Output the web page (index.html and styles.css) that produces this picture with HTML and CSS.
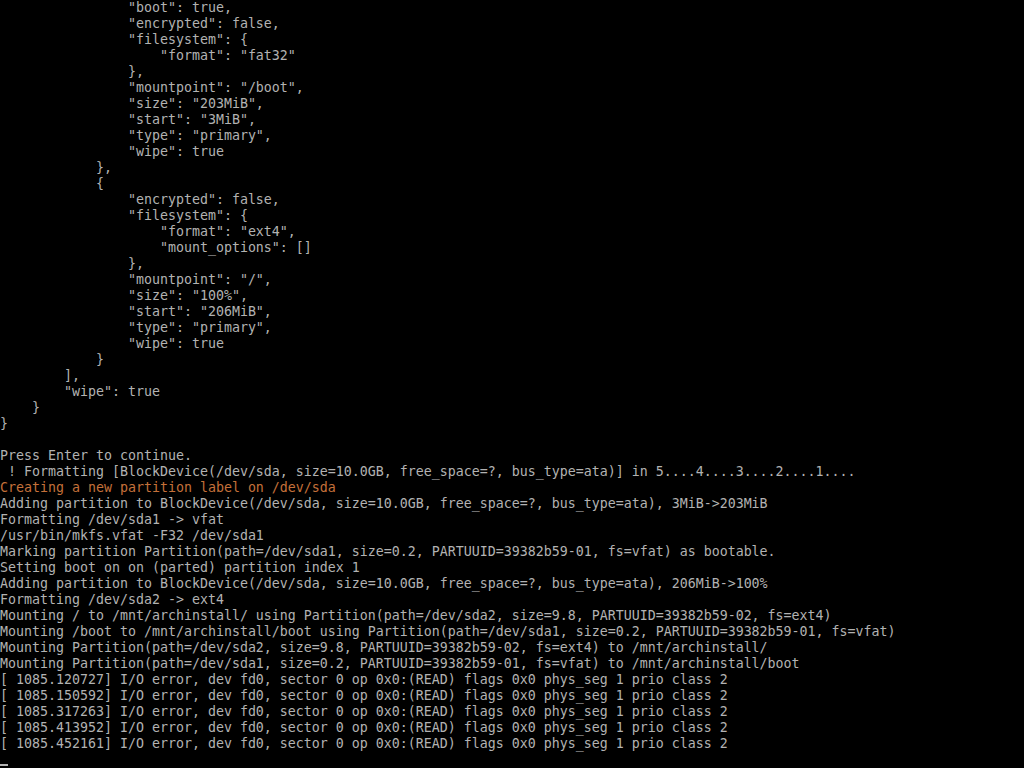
FILE: index.html
```html
<!DOCTYPE html>
<html>
<head>
<meta charset="utf-8">
<link rel="stylesheet" href="styles.css">
</head>
<body>
<pre class="console">                "boot": true,
                "encrypted": false,
                "filesystem": {
                    "format": "fat32"
                },
                "mountpoint": "/boot",
                "size": "203MiB",
                "start": "3MiB",
                "type": "primary",
                "wipe": true
            },
            {
                "encrypted": false,
                "filesystem": {
                    "format": "ext4",
                    "mount_options": []
                },
                "mountpoint": "/",
                "size": "100%",
                "start": "206MiB",
                "type": "primary",
                "wipe": true
            }
        ],
        "wipe": true
    }
}

Press Enter to continue.
 ! Formatting [BlockDevice(/dev/sda, size=10.0GB, free_space=?, bus_type=ata)] in 5....4....3....2....1....
<span class="warn">Creating a new partition label on /dev/sda</span>
Adding partition to BlockDevice(/dev/sda, size=10.0GB, free_space=?, bus_type=ata), 3MiB-&gt;203MiB
Formatting /dev/sda1 -&gt; vfat
/usr/bin/mkfs.vfat -F32 /dev/sda1
Marking partition Partition(path=/dev/sda1, size=0.2, PARTUUID=39382b59-01, fs=vfat) as bootable.
Setting boot on on (parted) partition index 1
Adding partition to BlockDevice(/dev/sda, size=10.0GB, free_space=?, bus_type=ata), 206MiB-&gt;100%
Formatting /dev/sda2 -&gt; ext4
Mounting / to /mnt/archinstall/ using Partition(path=/dev/sda2, size=9.8, PARTUUID=39382b59-02, fs=ext4)
Mounting /boot to /mnt/archinstall/boot using Partition(path=/dev/sda1, size=0.2, PARTUUID=39382b59-01, fs=vfat)
Mounting Partition(path=/dev/sda2, size=9.8, PARTUUID=39382b59-02, fs=ext4) to /mnt/archinstall/
Mounting Partition(path=/dev/sda1, size=0.2, PARTUUID=39382b59-01, fs=vfat) to /mnt/archinstall/boot
[ 1085.120727] I/O error, dev fd0, sector 0 op 0x0:(READ) flags 0x0 phys_seg 1 prio class 2
[ 1085.150592] I/O error, dev fd0, sector 0 op 0x0:(READ) flags 0x0 phys_seg 1 prio class 2
[ 1085.317263] I/O error, dev fd0, sector 0 op 0x0:(READ) flags 0x0 phys_seg 1 prio class 2
[ 1085.413952] I/O error, dev fd0, sector 0 op 0x0:(READ) flags 0x0 phys_seg 1 prio class 2
[ 1085.452161] I/O error, dev fd0, sector 0 op 0x0:(READ) flags 0x0 phys_seg 1 prio class 2
<span class="cursor"></span></pre>
</body>
</html>
```
FILE: styles.css
```css
html, body {
  margin: 0;
  padding: 0;
  background: #000;
  width: 1024px;
  height: 768px;
  overflow: hidden;
}
.console {
  margin: 0;
  padding: 0;
  font-family: "DejaVu Sans Mono", "Liberation Mono", monospace;
  font-size: 13.29px;
  line-height: 16px;
  color: #b2b2b2;
  white-space: pre;
}
.warn {
  color: #c4703a;
}
.cursor {
  display: inline-block;
  width: 8px;
  height: 12px;
  border-bottom: 2px solid #b2b2b2;
  margin-bottom: 2px;
  vertical-align: top;
}
```
